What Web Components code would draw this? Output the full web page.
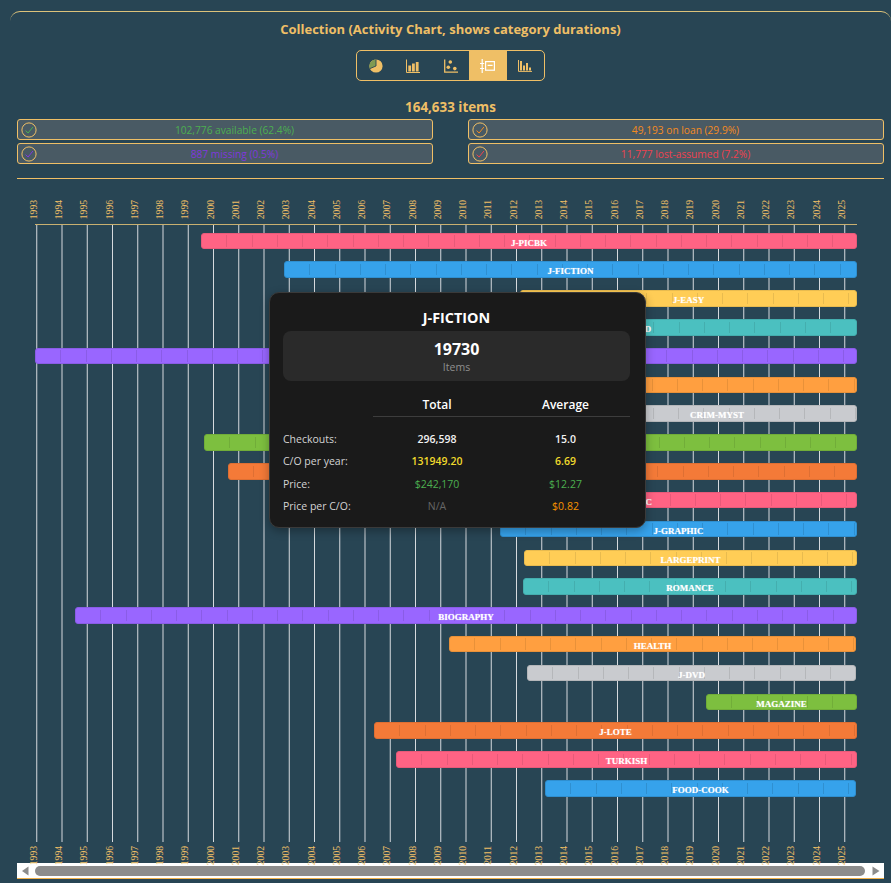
<!DOCTYPE html>
<html><head><meta charset="utf-8">
<style>
html,body{margin:0;padding:0;background:#284554;}
body{width:891px;height:883px;overflow:hidden;font-family:"Open Sans","Noto Sans",sans-serif;}
</style></head><body>
<collection-panel></collection-panel>
<script>
const GOLD='#efbf66';
const YEARS=[];for(let y=1993;y<=2025;y++)YEARS.push(y);
const STEP=25.25,X0=36.75,LEFT=17;

class ChartButtons extends HTMLElement{
 constructor(){super();this.attachShadow({mode:'open'}).innerHTML=`<style>
 :host{display:flex;width:189px;height:31px;box-sizing:border-box;border:1px solid ${GOLD};border-radius:5px;overflow:hidden}
 span{flex:1;display:flex;align-items:center;justify-content:center}
 span.on{background:${GOLD}}
 svg{display:block}
 </style>
 <span><svg width="14" height="14" viewBox="0 0 14 14"><circle cx="7" cy="7" r="6.6" fill="${GOLD}"/><path d="M7 .4A6.6 6.6 0 0 0 .9 9.6L7 7Z" fill="#7f9a52"/><path d="M7 7L7 .4M7 7L.9 9.6" stroke="#284554" stroke-width=".9"/></svg></span>
 <span><svg width="14" height="14" viewBox="0 0 14 14"><path d="M.5 .5V13.5H14" fill="none" stroke="${GOLD}" stroke-width="1"/><rect x="2.3" y="6.5" width="2.8" height="6" fill="${GOLD}"/><rect x="6" y="4.5" width="2.8" height="8" fill="${GOLD}"/><rect x="9.8" y="3" width="2.8" height="9.5" fill="${GOLD}"/></svg></span>
 <span><svg width="14" height="14" viewBox="0 0 14 14"><path d="M.7 .5V13.2H14" fill="none" stroke="${GOLD}" stroke-width="1.3"/><circle cx="6.3" cy="3" r="1.8" fill="${GOLD}"/><circle cx="4.3" cy="8.3" r="1.8" fill="${GOLD}"/><circle cx="10.8" cy="9.6" r="1.8" fill="${GOLD}"/></svg></span>
 <span class="on"><svg width="15" height="14" viewBox="0 0 15 14" fill="none" stroke="#fff" stroke-width="1.2"><path d="M2.2 0V14"/><path d="M0 4.5H4.2M0 9.5H4.2"/><rect x="5.6" y="2.6" width="8.8" height="8.6"/><path d="M7.6 6.4H12.6" stroke-width="1.4"/></svg></span>
 <span><svg width="14" height="13" viewBox="0 0 14 13"><path d="M.5 1V12.4H14" fill="none" stroke="${GOLD}" stroke-width="1"/><rect x="2" y="2" width="2" height="9.5" fill="${GOLD}"/><rect x="5" y="6.5" width="2" height="5" fill="${GOLD}"/><rect x="8" y="4" width="2" height="7.5" fill="${GOLD}"/><rect x="11" y="8.5" width="2" height="3" fill="${GOLD}"/></svg></span>`;
 }
}
customElements.define('chart-buttons',ChartButtons);

class StatusChip extends HTMLElement{
 constructor(){super();const c=this.getAttribute('color');this.attachShadow({mode:'open'}).innerHTML=`<style>
 :host{display:flex;align-items:center;height:21px;box-sizing:border-box;border:1px solid ${GOLD};border-radius:3px;background:#495a64;font-size:10.2px;color:${c}}
 svg{margin-left:3px;flex:none}
 div{flex:1;text-align:center}
 </style><svg width="16" height="16" viewBox="0 0 16 16"><circle cx="8" cy="8" r="7.1" fill="none" stroke="${GOLD}" stroke-width="1"/><path d="M4.6 8.6L7.1 11L11.9 5" fill="none" stroke="${c}" stroke-width="1"/></svg><div><slot></slot></div>`;
 }
}
customElements.define('status-chip',StatusChip);

class YearAxis extends HTMLElement{
 constructor(){super();this.attachShadow({mode:'open'}).innerHTML=`<style>
 :host{display:flex;height:var(--h,22px);padding-left:${X0-LEFT-STEP/2-3}px;font:9.6px "Liberation Serif",serif;color:${GOLD}}
 span{width:${STEP}px;display:flex;align-items:var(--align,flex-end);justify-content:center;flex:none}
 b{font-weight:400;writing-mode:vertical-rl;transform:rotate(180deg);line-height:10px}
 </style>`+YEARS.map(y=>`<span><b>${y}</b></span>`).join('');
 }
}
customElements.define('year-axis',YearAxis);

class GanttBar extends HTMLElement{
 constructor(){super();
 const s=+this.getAttribute('start'),e=+this.getAttribute('end'),c=this.getAttribute('color'),d=this.getAttribute('dark');
 const ticks=[];for(let x=STEP-1;x<e-s-3;x+=STEP)ticks.push(`<i style="left:${x}px"></i>`);
 this.attachShadow({mode:'open'}).innerHTML=`<style>
 :host{display:block;height:16.5px;margin:0 0 12.32px ${s-LEFT}px;width:${e-s}px;box-sizing:border-box;background:${c};border:1px solid ${d};border-radius:3px;position:relative;text-align:center;font:700 9px/18px "Liberation Serif",serif;color:#fff;white-space:nowrap}
 i{position:absolute;top:1.5px;bottom:1.5px;width:1px;background:${d}}
 .l{position:relative;display:inline-block;text-shadow:0 0 1px rgba(255,255,255,.6);height:14px}
 </style>${ticks.join('')}<span class="l"><slot></slot></span>`;
 }
}
customElements.define('gantt-bar',GanttBar);

class GanttChart extends HTMLElement{
 constructor(){super();
 const lines=YEARS.map(y=>{const x=X0+(y-1993)*STEP-LEFT;return `<line x1="${x}" x2="${x}" y1="0" y2="618"/>`}).join('');
 this.attachShadow({mode:'open'}).innerHTML=`<style>
 :host{display:block;position:relative;height:618px;box-sizing:border-box;padding-top:8.6px;width:840px;overflow:hidden}
 .top{position:absolute;left:${35-LEFT}px;top:0;width:822px;height:1px;background:#c9b070}
 svg{position:absolute;left:0;top:0}
 line{stroke:#d6dade;stroke-width:1}
 .rows{position:relative}
 </style><svg width="840" height="618">${lines}</svg><div class="top"></div><div class="rows"><slot></slot></div>`;
 }
}
customElements.define('gantt-chart',GanttChart);

class InfoTooltip extends HTMLElement{
 constructor(){super();
 const row=(l,a,b,ca,cb,w)=>`<div class="lab">${l}</div><div class="v" style="color:${ca};font-weight:${w}">${a}</div><div class="v" style="color:${cb};font-weight:${w}">${b}</div>`;
 this.attachShadow({mode:'open'}).innerHTML=`<style>
 :host{display:block;position:absolute;left:269px;top:292px;width:377px;height:236px;box-sizing:border-box;background:#1a1a1a;border:1px solid #3a3a3a;border-radius:10px;box-shadow:0 3px 10px rgba(0,0,0,.3);padding:0 15px 0 13px;color:#fff;font-family:"Open Sans",sans-serif}
 h3{margin:0;padding-top:15px;height:38px;box-sizing:border-box;text-align:center;font-size:14.4px;font-weight:700;line-height:19px}
 .box{height:50px;background:#2a2a2a;border-radius:8px;text-align:center;box-sizing:border-box;padding-top:8px}
 .n{font-size:16px;font-weight:700;line-height:20px}
 .i{font-size:10.5px;color:#8f8f8f;line-height:16px}
 .t{display:grid;grid-template-columns:90px 128px 129px;margin-top:13px;font-size:10.5px}
 .h{font-size:12px;font-weight:600;text-align:center;line-height:21px;height:22px;border-bottom:1px solid #3d3d3d}
 .lab{color:#d4d4d4;line-height:22.3px}
 .v{text-align:center;line-height:22.3px}
 .sp{grid-column:1/4;height:11px}
 </style><h3>J-FICTION</h3><div class="box"><div class="n">19730</div><div class="i">Items</div></div>
 <div class="t"><div></div><div class="h">Total</div><div class="h">Average</div><div class="sp"></div>
 ${row('Checkouts:','296,598','15.0','#f2f2f2','#f2f2f2',600)}
 ${row('C/O per year:','131949.20','6.69','#f0d92c','#f0d92c',600)}
 ${row('Price:','$242,170','$12.27','#4caf50','#4caf50',400)}
 ${row('Price per C/O:','N/A','$0.82','#666','#f59300',400)}
 </div>`;
 }
}
customElements.define('info-tooltip',InfoTooltip);

class FakeScrollbar extends HTMLElement{
 constructor(){super();this.attachShadow({mode:'open'}).innerHTML=`<style>
 :host{display:flex;align-items:center;height:16px;box-sizing:border-box;background:#fff;border-bottom:1px solid #f0b04a;padding:0 4px 0 4px;gap:6px}
 .t{flex:1;height:10px;border-radius:5px;background:#8c8c8c}
 svg{flex:none}
 svg:last-child{margin-left:1px}
 </style><svg width="8" height="10" viewBox="0 0 8 10"><path d="M7.5 0.5V9.5L1 5Z" fill="#8c8c8c"/></svg><div class="t"></div><svg width="8" height="10" viewBox="0 0 8 10"><path d="M0.5 0.5V9.5L7.5 5Z" fill="#8c8c8c"/></svg>`;
 }
}
customElements.define('fake-scrollbar',FakeScrollbar);

class CollectionPanel extends HTMLElement{
 constructor(){super();
 const C={pink:['#ff6384','#e85a79'],blue:['#36a2eb','#2f8fd0'],yel:['#ffcd56','#e8bb4f'],teal:['#4bc0c0','#44aeae'],pur:['#9966ff','#8a5ce6'],org:['#ff9f40','#e89139'],gry:['#c9cbcf','#b5b7ba'],grn:['#7dbf3f','#71ad39'],red:['#f47a38','#de6f33']};
 const bars=[[201,857,'pink','J-PICBK'],[284,857,'blue','J-FICTION'],[520,857,'yel','J-EASY'],[426,857,'teal','DVD'],[35,857,'pur',''],[500,857,'org',''],[577,857,'gry','CRIM-MYST'],[204,857,'grn',''],[228,857,'red',''],[417,857,'pink','MUSIC'],[500,857,'blue','J-GRAPHIC'],[524,857,'yel','LARGEPRINT'],[523,857,'teal','ROMANCE'],[75,857,'pur','BIOGRAPHY'],[449,856,'org','HEALTH'],[527,856,'gry','J-DVD'],[706,857,'grn','MAGAZINE'],[374,857,'red','J-LOTE'],[396,857,'pink','TURKISH'],[545,856,'blue','FOOD-COOK']];
 const barHtml=bars.map(b=>`<gantt-bar start="${b[0]}" end="${b[1]}" color="${C[b[2]][0]}" dark="${C[b[2]][1]}">${b[3]}</gantt-bar>`).join('');
 this.attachShadow({mode:'open'}).innerHTML=`<style>
 :host{display:block;position:relative;width:891px;height:883px;box-sizing:border-box;padding-top:11px;color:${GOLD}}
 .frame{margin-left:10px;width:881px;height:20px;border-top:1px solid #dcc27a;border-radius:10px 10px 0 0;box-sizing:border-box}
 h2{margin:-11px 0 0;font-size:13px;font-weight:700;text-align:center;line-height:18px;padding-left:10px;height:18px}
 .btnrow{display:flex;justify-content:center;margin-top:12px;padding-left:10px}
 h3{margin:17px 0 0;font-size:13.4px;font-weight:700;text-align:center;line-height:18px;padding-left:10px}
 .chips{display:grid;grid-template-columns:416px 416px;justify-content:space-between;row-gap:3px;margin:3px 7px 0 17px}
 .sep{margin:14px 7px 0 17px;height:1px;background:${GOLD}}
 .wrap{margin:18px 7px 0 17px}
 gantt-chart{margin-top:5px}
 </style>
 <div class="frame"></div>
 <h2>Collection (Activity Chart, shows category durations)</h2>
 <div class="btnrow"><chart-buttons></chart-buttons></div>
 <h3>164,633 items</h3>
 <div class="chips">
 <status-chip color="#4caf50">102,776 available (62.4%)</status-chip>
 <status-chip color="#f58a1f">49,193 on loan (29.9%)</status-chip>
 <status-chip color="#8038dd">887 missing (0.5%)</status-chip>
 <status-chip color="#f0414f">11,777 lost-assumed (7.2%)</status-chip>
 </div>
 <div class="sep"></div>
 <div class="wrap">
 <year-axis></year-axis>
 <gantt-chart>${barHtml}</gantt-chart>
 <year-axis style="--h:17px;--align:flex-start;margin-top:4px"></year-axis>
 <fake-scrollbar></fake-scrollbar>
 </div>
 <info-tooltip></info-tooltip>`;
 }
}
customElements.define('collection-panel',CollectionPanel);
</script>
</body></html>
